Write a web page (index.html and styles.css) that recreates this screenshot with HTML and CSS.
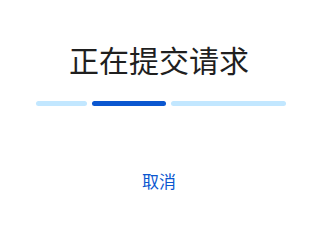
FILE: index.html
```html
<!DOCTYPE html>
<html lang="zh">
<head>
    <meta charset="UTF-8">
    <title>正在提交请求</title>
    <link rel="stylesheet" href="styles.css">
</head>
<body>
    <div class="dialog">
        <h1 class="title">正在提交请求</h1>
        <div class="progress">
            <span class="bar bar-a"></span>
            <span class="bar bar-active"></span>
            <span class="bar bar-b"></span>
        </div>
        <button class="cancel">取消</button>
    </div>
</body>
</html>
```

FILE: styles.css
```css
body {
    margin: 0;
    background: #fff;
    font-family: "Noto Sans CJK SC", "Noto Sans", sans-serif;
}
.dialog {
    display: flex;
    flex-direction: column;
    align-items: center;
    padding-top: 37px;
}
.title {
    margin: 0;
    font-size: 30px;
    font-weight: 400;
    line-height: 45px;
    color: #1f1f1f;
}
.progress {
    display: flex;
    gap: 5px;
    width: 250px;
    margin-top: 19px;
    margin-left: 4px;
}
.bar {
    height: 5px;
    border-radius: 3px;
    background: #c2e7ff;
}
.bar-a {
    width: 51px;
}
.bar-active {
    width: 74px;
    background: #0b57d0;
}
.bar-b {
    flex: 1;
}
.cancel {
    margin-top: 58px;
    border: none;
    background: none;
    padding: 4px 8px;
    font-family: inherit;
    font-size: 17px;
    color: #0b57d0;
    cursor: pointer;
}
```
